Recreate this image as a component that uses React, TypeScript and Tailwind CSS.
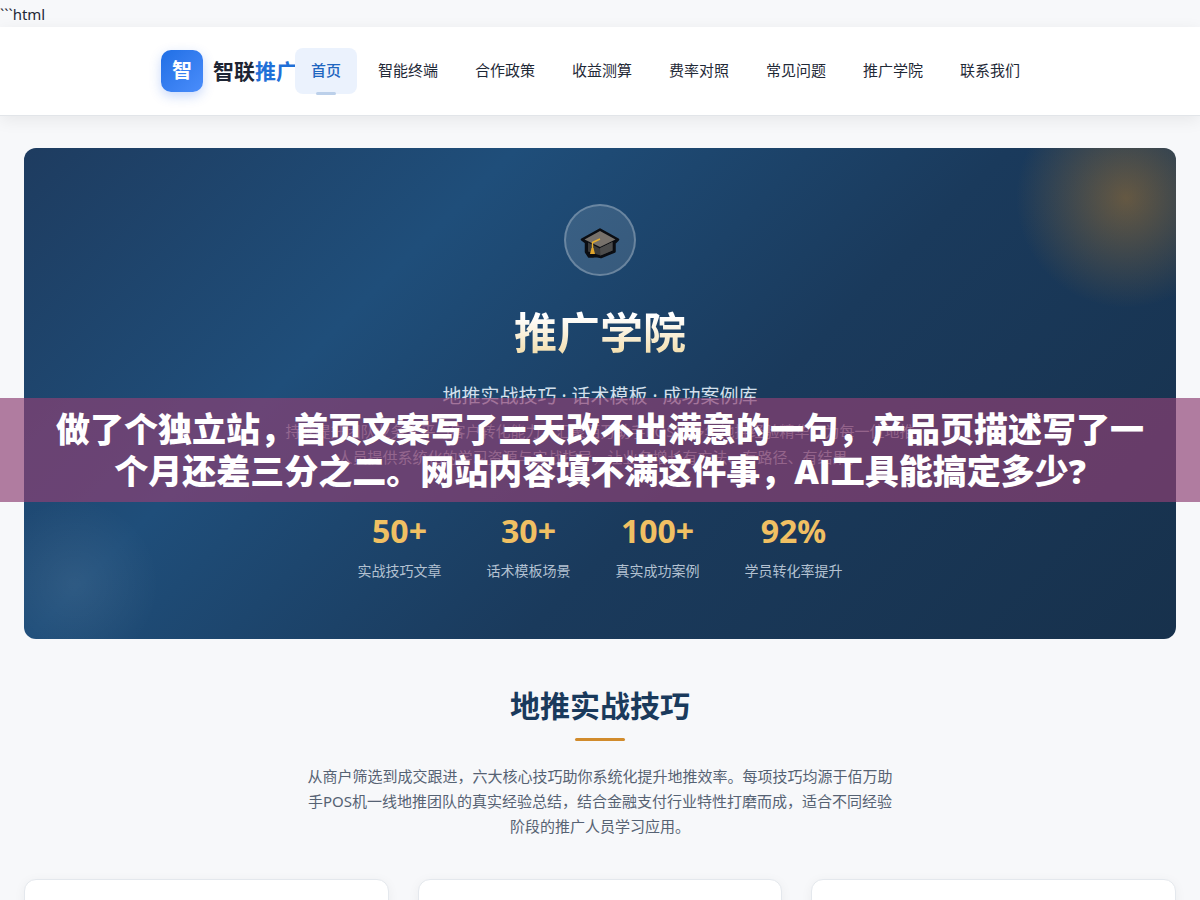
import React from 'react';

interface Stat {
    value: string;
    label: string;
}

const navItems = ['首页', '智能终端', '合作政策', '收益测算', '费率对照', '常见问题', '推广学院', '联系我们'];

const stats: Stat[] = [
    { value: '50+', label: '实战技巧文章' },
    { value: '30+', label: '话术模板场景' },
    { value: '100+', label: '真实成功案例' },
    { value: '92%', label: '学员转化率提升' },
];

const CapIcon: React.FC = () => (
    <svg viewBox="0 0 40 32" className="w-10 h-8" aria-hidden="true">
        <path d="M20 2.5 38 12.5 34.5 16v8.5L21 30 16 29 13 29.500H9L6 25v-9.500L2 12.500Z" fill="#0b0d12" stroke="#0b0d12" strokeWidth="2.5" strokeLinejoin="round" />
        <path d="M8 15.500 20 21.500 32.500 15v8.500L20.500 28.500 8 24.500Z" fill="#3a3a3a" />
        <path d="M20 21 32.500 15v8.500L20.500 28.500Z" fill="#4c4c4c" />
        <path d="M20 4 35.500 12.500 20 20 4.500 12.500Z" fill="#77716b" />
        <path d="M20 12 12.500 15.500V22" fill="none" stroke="#e8b02e" strokeWidth="1.400" strokeLinejoin="round" />
        <path d="M11.500 21h2l1.500 6h-5Z" fill="#e0a52c" />
    </svg>
);

const Header: React.FC = () => (
    <header className="relative bg-white border-b border-[#e2e5e9] shadow-[0_4px_16px_rgba(0,0,0,0.07)]">
        <div className="flex items-center justify-center h-22 pr-[3px]">
            <a href="#" className="flex items-center gap-[10px] shrink-0">
                <span className="flex items-center justify-center w-[42px] h-[42px] rounded-[10px] bg-linear-135 from-[#1f6fe5] to-[#4a8dfb] text-white text-xl font-bold shadow-[0_4px_12px_rgba(37,99,235,0.25)]">智</span>
                <span className="w-[82px] pt-0.5 whitespace-nowrap text-[21px] font-bold text-[#1d2433]">
                    智联<span className="text-[#1f70d8]">推广</span>
                </span>
            </a>
            <nav className="relative flex items-center gap-[5px]">
                {navItems.map((item, i) => (
                    <a
                        key={item}
                        href="#"
                        className={i === 0
                            ? 'relative px-4 h-[46px] leading-[44px] rounded-lg bg-[#ebf2fd] text-[15px] font-medium text-[#1f66c0] whitespace-nowrap'
                            : 'px-4 h-[46px] leading-[44px] text-[15px] text-[#1f2937] whitespace-nowrap'}
                    >
                        {item}
                        {i === 0 && <span className="absolute bottom-[-1px] left-1/2 -translate-x-1/2 w-5 h-[3px] rounded-full bg-[#bcd0ea]" />}
                    </a>
                ))}
            </nav>
        </div>
    </header>
);

const Hero: React.FC = () => (
    <section className="relative overflow-hidden rounded-xl py-14 text-center bg-[linear-gradient(135deg,#1e3c60_0%,#1f4e7a_30%,#1a3a5c_60%,#17314c_100%)]">
        <div className="absolute -top-15 -right-15 w-55 h-55 bg-[radial-gradient(closest-side,rgba(214,137,35,0.4),transparent)]" />
        <div className="absolute -bottom-[30px] -left-[35px] w-[170px] h-[170px] bg-[radial-gradient(closest-side,rgba(255,255,255,0.07),transparent)]" />
        <div className="relative flex flex-col items-center">
            <div className="flex items-center justify-center w-18 h-18 pt-1.5 rounded-full border-2 border-white/25 bg-white/12">
                <CapIcon />
            </div>
            <h1 className="mt-6 text-[43px] leading-[66px] font-bold text-transparent bg-clip-text bg-linear-to-b from-25% from-white to-80% to-[#f3dfb0]">推广学院</h1>
            <p className="mt-4 text-[19px] leading-7 text-[#d3e0ec]">地推实战技巧 · 话术模板 · 成功案例库</p>
            <p className="mt-2 text-[15px] leading-[26px] text-white/60">
                <span className="block">持续提升团队业务水平与客户转化能力，汇聚佰万助手POS机多年地推经验精华，为每一位地推</span>
                <span className="block">人员提供系统化的学习资源与实战指导，让业务增长有方法、有路径、有结果。</span>
            </p>
            <dl className="mt-[41px] flex justify-center gap-[45px]">
                {stats.map(s => (
                    <div key={s.label} className="flex flex-col-reverse gap-2">
                        <dt className="text-sm leading-6 text-[#b3c1d1]">{s.label}</dt>
                        <dd className="text-[32px] leading-10 font-bold text-[#f0c063]">{s.value}</dd>
                    </div>
                ))}
            </dl>
        </div>
    </section>
);

const Skills: React.FC = () => (
    <section className="pt-11 text-center">
        <h2 className="text-[30px] leading-[45px] font-bold text-[#1a3a5c]">地推实战技巧</h2>
        <div className="mx-auto mt-[10px] w-[50px] h-[3px] rounded-full bg-[#d18b2c]" />
        <p className="mt-[23px] text-[15px] leading-[25px] text-[#566273]">
            <span className="block">从商户筛选到成交跟进，六大核心技巧助你系统化提升地推效率。每项技巧均源于佰万助</span>
            <span className="block">手POS机一线地推团队的真实经验总结，结合金融支付行业特性打磨而成，适合不同经验</span>
            <span className="block">阶段的推广人员学习应用。</span>
        </p>
        <div className="mt-10 grid grid-cols-3 gap-[29px]">
            {[0, 1, 2].map(n => (
                <article key={n} className="h-80 rounded-xl border border-[#e4e8ed] bg-white shadow-[0_2px_12px_rgba(0,0,0,0.05)]" />
            ))}
        </div>
    </section>
);

const App: React.FC = () => {
    return (
        <div className="relative h-screen overflow-hidden bg-[#f7f8fa] text-[#1f2937] font-['Noto_Sans','Noto_Sans_CJK_SC',sans-serif]">
            <div className="h-[27px] pt-px text-[15px] leading-[27px]">```html</div>
            <Header />
            <main className="px-6 pt-8">
                <Hero />
                <Skills />
            </main>

            {/* Caption band over the page */}
            <div className="absolute inset-x-0 top-[398px] py-[10px] bg-[#8e4174]/68 text-center text-[34px] leading-[42px] font-black text-white font-['Open_Sans','Noto_Sans_CJK_SC',sans-serif]">
                <p>做了个独立站，首页文案写了三天改不出满意的一句，产品页描述写了一</p>
                <p>个月还差三分之二。网站内容填不满这件事，AI工具能搞定多少?</p>
            </div>
        </div>
    );
};

export default App;
